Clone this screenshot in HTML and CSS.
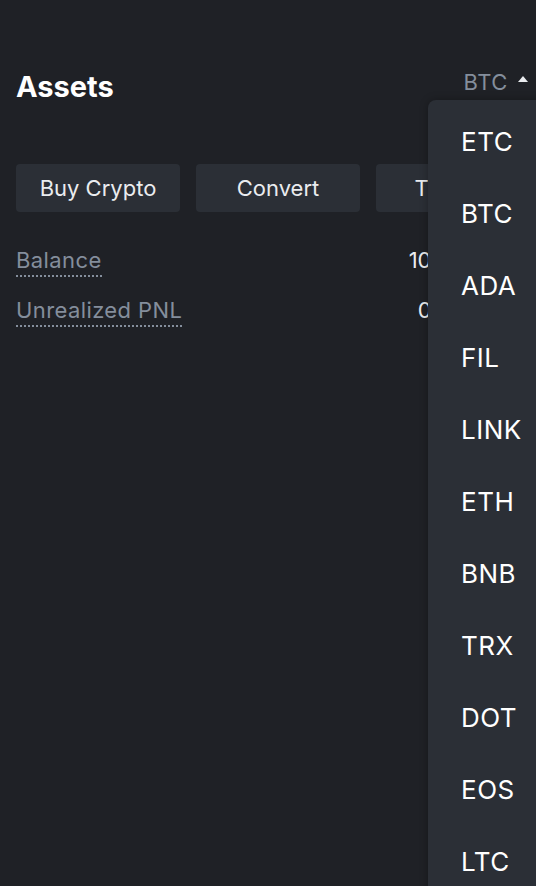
FILE: index.html
```html
<!DOCTYPE html>
<html>
<head>
<meta charset="utf-8">
<link rel="stylesheet" href="styles.css">
</head>
<body>
<div class="page">
  <div class="header">
    <h1 class="title">Assets</h1>
    <div class="picker">
      <span class="picker-label">BTC</span>
      <span class="caret"></span>
      <ul class="menu">
        <li>ETC</li><li>BTC</li><li>ADA</li><li>FIL</li><li>LINK</li><li>ETH</li>
        <li>BNB</li><li>TRX</li><li>DOT</li><li>EOS</li><li>LTC</li><li>XRP</li>
      </ul>
    </div>
  </div>
  <div class="actions">
    <button class="btn">Buy Crypto</button>
    <button class="btn">Convert</button>
    <button class="btn">Transfer</button>
  </div>
  <div class="rows">
    <div class="row"><span class="label">Balance</span><span class="value">10.000000</span></div>
    <div class="row"><span class="label">Unrealized PNL</span><span class="value">0.000000</span></div>
  </div>
</div>
</body>
</html>
```
FILE: styles.css
```css
html, body {
  margin: 0;
  padding: 0;
  background: #1f2126;
  overflow: hidden;
}
body {
  width: 536px;
  height: 886px;
  font-family: Inter, "Noto Sans", sans-serif;
  color: #eaecef;
}
.page {
  padding: 0 16px;
}
.header {
  display: flex;
  justify-content: space-between;
  align-items: center;
  margin-top: 56px;
  height: 60px;
}
.title {
  margin: 0;
  font-size: 29px;
  font-weight: 700;
  color: #ffffff;
}
.picker {
  position: relative;
  display: flex;
  align-items: center;
  gap: 10px;
  align-self: flex-start;
  padding-top: 13px;
  margin-right: -8px;
}
.picker-label {
  font-size: 22px;
  letter-spacing: 0.6px;
  color: #848e9c;
}
.caret {
  width: 0;
  height: 0;
  border-left: 5px solid transparent;
  border-right: 5px solid transparent;
  border-bottom: 6px solid #eaecef;
  margin-top: -6px;
}
.menu {
  position: absolute;
  top: 44px;
  right: -16px;
  width: 116px;
  margin: 0;
  padding: 6px 0 0;
  list-style: none;
  background: #2b2f36;
  border-radius: 8px 0 0 0;
  box-shadow: 0 0 8px rgba(0,0,0,0.3);
  z-index: 5;
}
.menu li {
  height: 72px;
  line-height: 72px;
  padding-left: 33px;
  font-size: 26px;
  letter-spacing: 0.5px;
  color: #ffffff;
}
.actions {
  display: flex;
  gap: 16px;
  margin-top: 48px;
}
.btn {
  flex: 0 0 164px;
  height: 48px;
  border: none;
  border-radius: 4px;
  background: #2b2f36;
  color: #eaecef;
  font-family: inherit;
  font-size: 22px;
  padding: 0;
}
.rows {
  margin-top: 35px;
  display: flex;
  flex-direction: column;
  gap: 18px;
}
.row {
  display: flex;
  justify-content: space-between;
  align-items: flex-start;
  height: 32px;
}
.label {
  font-size: 22px;
  letter-spacing: 0.4px;
  color: #848e9c;
  border-bottom: 2px dotted #848e9c;
  padding-bottom: 2px;
  line-height: 26px;
}
.value {
  font-size: 22px;
  color: #eaecef;
  line-height: 26px;
}
```
